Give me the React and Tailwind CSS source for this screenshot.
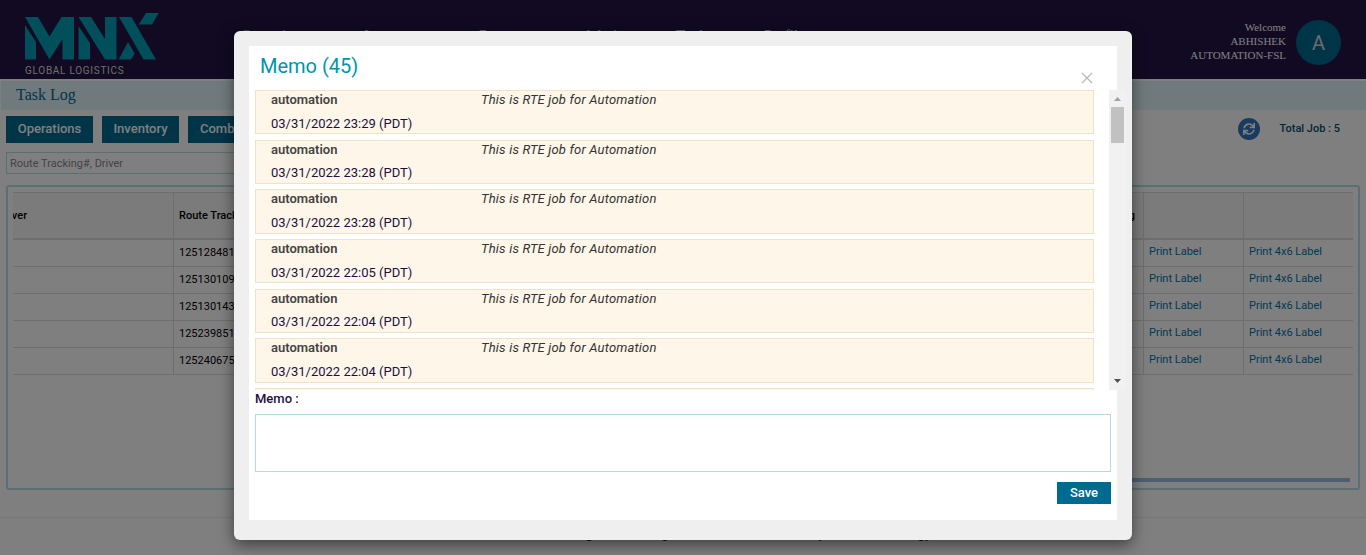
import React from "react";
import { FaSync } from "react-icons/fa";

const memos = ["23:29", "23:28", "23:28", "22:05", "22:04", "22:04"];
const jobs = ["125128481", "125130109", "125130143", "125239851", "125240675"];
const nav = [
  ["Operations", "w-[123px]"],
  ["Inventory", "w-[115px]"],
  ["Reports", "w-[104px]"],
  ["Admin", "w-[93px]"],
  ["Tools", "w-[88px]"],
  ["Profile", "w-[88px]"],
];

function Logo() {
  return (
    <svg width="134" height="47" viewBox="25 13 134 47" fill="#009eb4">
      <path d="M25 17H38L49.500 36.500L61.500 17H74V59.500H62.500V39L49.500 59.500Z" />
      <path d="M25 25L36 42V59.500H25Z" />
      <path d="M78.500 17H91L105 39V17H116.500V59.500H105Z" />
      <path d="M78.500 26L90 43V59.500H78.500Z" />
      <path d="M119 17H131.500L156 59.500H143.500Z" />
      <path d="M128 42L134.700 53.500L131 59.500H118.700Z" />
      <path d="M146 13H158.700L152 24.500H138.700Z" />
    </svg>
  );
}

function Header() {
  return (
    <header className="flex h-[79px] bg-[#221544]">
      <div className="w-[241px] shrink-0 pl-[25px] pt-[13px]">
        <Logo />
        <div className="mt-[5px] font-[Roboto] text-[10px] leading-3 tracking-[0.72px] text-[#dddddd]">GLOBAL LOGISTICS</div>
      </div>
      <nav className="flex grow pt-[25px] text-[15px] leading-5 text-[#cccccc]">
        {nav.map(([t, w]) => <span key={t} className={w}>{t}</span>)}
      </nav>
      <div className="pt-[20px] text-right text-[11px] leading-[14px] text-white">
        <div>Welcome</div>
        <div>ABHISHEK</div>
        <div>AUTOMATION-FSL</div>
      </div>
      <div className="mt-5 mr-[25px] ml-[10px] flex size-[45px] items-center justify-center rounded-full bg-[#006b91] font-[Roboto] text-[20px] text-[#d8d8e0]">A</div>
    </header>
  );
}

function Tracking() {
  return (
    <div className="mx-[6px] mt-[11px] h-[305px] overflow-hidden rounded-[3px] border-2 border-[#b5dfe3] px-[5px] pt-[5px] text-[11px] text-black">
      <div className="flex h-[48px] items-center border-y border-b-2 border-[#dddddd] bg-[#f7f7f7] font-medium">
        <div className="flex h-full w-[161px] items-center overflow-hidden border-r border-[#dddddd] pt-px"><span className="-ml-[15px]">Driver</span></div>
        <div className="flex h-full w-[970px] items-center justify-between border-r border-[#dddddd] px-[5px] pt-px"><span>Route Tracking#</span><span className="pr-[3px]">Tracking</span></div>
        <div className="h-full w-[100px] border-r border-[#dddddd]" />
      </div>
      {jobs.map((j) => (
        <div key={j} className="flex h-[27px] items-center border-b border-[#dddddd]">
          <div className="h-full w-[161px] border-r border-[#dddddd]" />
          <div className="flex h-full w-[970px] items-center border-r border-[#dddddd] pl-[5px]">{j}</div>
          <div className="h-full w-[100px] border-r border-[#dddddd] pt-[4px] pl-[5px] leading-4 text-[#0073ad]">Print Label</div>
          <div className="h-full pt-[4px] pl-[5px] leading-4 text-[#0073ad]">Print 4x6 Label</div>
        </div>
      ))}
      <div className="mt-[103px] mr-[3px] ml-auto h-1 w-[1000px] bg-[#99bee5]" />
    </div>
  );
}

function Page() {
  return (
    <div className="h-[555px] bg-white">
      <Header />
      <div className="mt-[2px] ml-px h-[29px] bg-[#e1f4f9] pl-[15px] text-[16px] leading-[28px] text-[#006b91]">Task Log</div>
      <div className="mt-[6px] flex h-[27px] gap-[9px] pl-[6px] font-[Roboto] text-[13px] leading-[26px] font-medium text-white">
        <div className="w-[87px] bg-[#006b91] text-center">Operations</div>
        <div className="w-[77px] bg-[#006b91] text-center">Inventory</div>
        <div className="w-[87px] bg-[#006b91] pl-3">Combined</div>
        <div className="ml-auto flex items-start pr-[26px]">
          <div className="mt-[2px] mr-5 flex size-[22px] items-center justify-center rounded-full bg-[#3377bb]"><FaSync className="size-3 text-white" /></div>
          <span className="text-[11px] leading-[25px] text-[#004f6e]">Total Job : 5</span>
        </div>
      </div>
      <div className="mt-[9px] ml-[6px] h-[22px] w-[400px] border border-[#b5dfe3] pl-[3px] font-[Roboto] text-[11px] leading-[21px] text-[#888888]">Route Tracking#, Driver</div>
      <div className="font-[Roboto]"><Tracking /></div>
      <footer className="mt-[27px] border-t border-[#eeeeee] pt-[6px] text-center font-[Roboto] text-[14px] leading-[18px] text-[#333333]"><span className="ml-[8px]">© 2022 MNX Global Logistics. All rights reserved. Powered by MNX technology</span></footer>
    </div>
  );
}

function Scrollbar() {
  return (
    <div className="flex h-[300px] w-[17px] flex-col items-center bg-[#f1f1f1]">
      <svg width="17" height="17"><path d="M5 11H12L8.500 7Z" fill="#a3a3a3" /></svg>
      <div className="h-9 w-[13px] bg-[#c1c1c1]" />
      <svg className="mt-auto" width="17" height="17"><path d="M5 6H12L8.500 10Z" fill="#505050" /></svg>
    </div>
  );
}

function MemoDialog() {
  return (
    <div className="h-[509px] w-[898px] rounded-[6px] bg-[#efefef] px-[15px] pt-[15px] font-[Roboto] text-[13px] shadow-[0_5px_15px_rgba(0,0,0,0.5)]">
      <div className="h-[474px] bg-white pl-[6px]">
        <div className="flex h-11 justify-between pr-[24px] pl-[5px]">
          <h1 className="pt-[6px] text-[20px] leading-7 text-[#0094ad]">Memo (45)</h1>
          <svg className="mt-[26px]" width="12" height="12" stroke="#b8b8b8" strokeWidth="1.300"><path d="M1 1L11 11M11 1L1 11" /></svg>
        </div>
        <div className="flex h-[300px] w-[871px] overflow-hidden">
          <div className="mr-[15px] flex w-[839px] shrink-0 flex-col gap-[5.370px]">
            {memos.map((t, i) => (
              <div key={i} className="flex h-[44.300px] shrink-0 border border-[#eee3c3] bg-[#fef6e9] pl-[15px]">
                <div className="w-[210px]">
                  <div className="h-[23.600px] leading-[18px] font-semibold text-[#444444]">automation</div>
                  <div className="leading-[18px] text-[#1c1040]">03/31/2022 {t} (PDT)</div>
                </div>
                <div className="leading-[18px] tracking-[0.18px] text-[#333333] italic">This is RTE job for Automation</div>
              </div>
            ))}
            <div className="h-[44.300px] shrink-0 border border-[#eee3c3] bg-[#fef6e9]" />
          </div>
          <Scrollbar />
        </div>
        <div className="h-6 leading-[18px] font-medium text-[#1c1040]">Memo :</div>
        <textarea className="block h-[58px] w-[856px] resize-none border border-[#b5dadf] bg-white" />
        <div className="mt-[10px] flex justify-end pr-[6px]"><button className="h-[22px] w-[54px] bg-[#006a91] leading-[22px] font-medium text-white">Save</button></div>
      </div>
    </div>
  );
}

export default function App() {
  return (
    <div className="relative h-[555px] w-[1366px] overflow-hidden font-['Liberation_Serif',serif]">
      <Page />
      <div className="absolute inset-0 flex items-start bg-black/50 pt-[31px] pl-[234px]"><MemoDialog /></div>
    </div>
  );
}
